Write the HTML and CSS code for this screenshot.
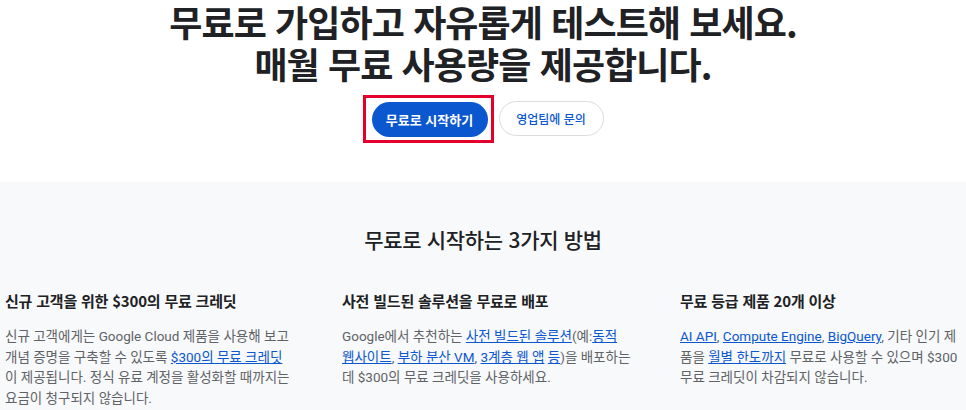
FILE: index.html
```html
<!DOCTYPE html>
<html lang="ko">
<head>
<meta charset="utf-8">
<link rel="stylesheet" href="styles.css">
</head>
<body>
<section class="hero">
  <h1 class="hero-title">무료로 가입하고 자유롭게 테스트해 보세요.<br>매월 무료 사용량을 제공합니다.</h1>
  <div class="actions">
    <div class="highlight">
      <a class="btn btn-primary" href="#">무료로 시작하기</a>
    </div>
    <a class="btn btn-outline" href="#">영업팀에 문의</a>
  </div>
</section>
<section class="ways">
  <h2 class="ways-title">무료로 시작하는 3가지 방법</h2>
  <div class="cols">
    <div class="col">
      <h3 class="col-title">신규 고객을 위한 $300의 무료 크레딧</h3>
      <p class="col-text">신규 고객에게는 Google Cloud 제품을 사용해 보고<br>개념 증명을 구축할 수 있도록 <a href="#">$300의 무료 크레딧</a><br>이 제공됩니다. 정식 유료 계정을 활성화할 때까지는<br>요금이 청구되지 않습니다.</p>
    </div>
    <div class="col">
      <h3 class="col-title">사전 빌드된 솔루션을 무료로 배포</h3>
      <p class="col-text">Google에서 추천하는 <a href="#">사전 빌드된 솔루션</a>(예:<a href="#">동적<br>웹사이트</a>, <a href="#">부하 분산 VM</a>, <a href="#">3계층 웹 앱</a> <a href="#">등</a>)을 배포하는<br>데 $300의 무료 크레딧을 사용하세요.</p>
    </div>
    <div class="col">
      <h3 class="col-title">무료 등급 제품 20개 이상</h3>
      <p class="col-text"><a href="#">AI API</a>, <a href="#">Compute Engine</a>, <a href="#">BigQuery</a>, 기타 인기 제<br>품을 <a href="#">월별 한도까지</a> 무료로 사용할 수 있으며 $300<br>무료 크레딧이 차감되지 않습니다.</p>
    </div>
  </div>
</section>
</body>
</html>
```
FILE: styles.css
```css
* { box-sizing: border-box; }
html, body { margin: 0; padding: 0; }
body {
  font-family: Roboto, "Noto Sans CJK KR", sans-serif;
  color: #202124;
  background: #fff;
  width: 966px;
  height: 410px;
  overflow: hidden;
}
.hero {
  height: 182px;
  padding-top: 0;
  text-align: center;
}
.hero-title {
  margin: 0;
  font-family: "Noto Sans CJK KR", sans-serif;
  font-weight: 700;
  font-size: 36px;
  line-height: 42px;
  letter-spacing: -0.9px;
  color: #202124;
}
.actions {
  display: flex;
  justify-content: center;
  align-items: center;
  gap: 5px;
  margin-top: 11px;
}
.highlight {
  border: 3px solid #e4002b;
  padding: 4px 3px 3px 6px;
  display: flex;
}
.btn {
  display: inline-flex;
  align-items: center;
  justify-content: center;
  height: 35px;
  border-radius: 18px;
  font-family: "Noto Sans CJK KR", sans-serif;
  font-size: 13px;
  text-decoration: none;
}
.btn-primary {
  width: 116px;
  background: #0b57d0;
  color: #fff;
  font-weight: 700;
}
.btn-outline {
  width: 105px;
  background: #fff;
  color: #0b57d0;
  border: 1px solid #dadce0;
  font-weight: 500;
  font-size: 12px;
  margin-top: -1px;
}
.ways {
  background: #f8f9fa;
  height: 228px;
  padding-top: 43px;
}
.ways-title {
  margin: 0;
  text-align: center;
  font-family: "Noto Sans CJK KR", sans-serif;
  font-weight: 500;
  font-size: 21px;
  line-height: 28px;
  letter-spacing: -0.3px;
  color: #202124;
}
.cols {
  display: grid;
  grid-template-columns: 337px 338px 291px;
  padding-left: 5px;
  margin-top: 37px;
}
.col-title {
  margin: 0;
  font-family: "Noto Sans CJK KR", sans-serif;
  font-size: 15px;
  font-weight: 700;
  line-height: 22px;
  letter-spacing: -0.2px;
  color: #202124;
}
.col-text {
  margin: 14px 0 0;
  font-size: 13.5px;
  line-height: 20.5px;
  color: #5f6368;
  white-space: nowrap;
}
.col-text a {
  color: #0b57d0;
  text-decoration: underline;
}
```
